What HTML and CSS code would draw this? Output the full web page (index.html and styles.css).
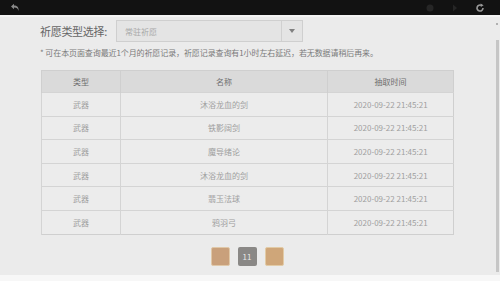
FILE: index.html
```html
<!DOCTYPE html>
<html lang="zh">
<head>
<meta charset="utf-8">
<link rel="stylesheet" href="styles.css">
</head>
<body>
<div class="topbar">
  <svg class="back" width="10" height="9" viewBox="0 0 10 9"><path d="M1 3.5 L4 0.8 L4 2.5 C7 2.5 9 4 8.5 8 C7.8 5.5 6.5 4.5 4 4.6 L4 6.2 Z" fill="#8a8a8a"/></svg>
  <div class="nav">
    <svg width="10" height="10" viewBox="0 0 10 10"><circle cx="5" cy="5" r="3.5" fill="#262626"/></svg>
    <svg width="10" height="10" viewBox="0 0 10 10"><path d="M3 1.5 L7 5 L3 8.5 Z" fill="#262626"/></svg>
    <svg width="10" height="10" viewBox="0 0 10 10"><path d="M8 5 A3 3 0 1 1 6.5 2.4" fill="none" stroke="#9a9a9a" stroke-width="1.6"/><path d="M5.6 0.6 L8.6 2.2 L5.8 4 Z" fill="#9a9a9a"/></svg>
  </div>
</div>
<div class="main">
  <div class="content">
    <div class="selrow">
      <span class="label">祈愿类型选择:</span>
      <div class="select">
        <span class="seltext">常驻祈愿</span>
        <span class="arrowbox"><span class="tri"></span></span>
      </div>
    </div>
    <p class="note">* 可在本页面查询最近1个月的祈愿记录，祈愿记录查询有1小时左右延迟，若无数据请稍后再来。</p>
    <table class="records">
      <thead>
        <tr><th class="c1">类型</th><th class="c2">名称</th><th class="c3">抽取时间</th></tr>
      </thead>
      <tbody>
        <tr><td>武器</td><td>沐浴龙血的剑</td><td>2020-09-22 21:45:21</td></tr>
        <tr><td>武器</td><td>铁影阔剑</td><td>2020-09-22 21:45:21</td></tr>
        <tr><td>武器</td><td>魔导绪论</td><td>2020-09-22 21:45:21</td></tr>
        <tr><td>武器</td><td>沐浴龙血的剑</td><td>2020-09-22 21:45:21</td></tr>
        <tr><td>武器</td><td>翡玉法球</td><td>2020-09-22 21:45:21</td></tr>
        <tr><td>武器</td><td>鸦羽弓</td><td>2020-09-22 21:45:21</td></tr>
      </tbody>
    </table>
    <div class="pager">
      <span class="pg prev"></span>
      <span class="pg cur">11</span>
      <span class="pg next"></span>
    </div>
  </div>
  <div class="scroll">
    <span class="mark"></span>
    <span class="thumb"></span>
  </div>
</div>
<div class="footer"></div>
</body>
</html>
```
FILE: styles.css
```css
* { box-sizing: border-box; }
html, body { margin: 0; padding: 0; }
body {
  width: 500px;
  height: 281px;
  overflow: hidden;
  background: #f7f7f7;
  font-family: "Noto Sans CJK SC", "Noto Sans", sans-serif;
}
.topbar {
  height: 17px;
  background: #121212;
  border-bottom: 2px solid #f4f4f4;
  display: flex;
  align-items: flex-start;
  justify-content: space-between;
  padding: 3px 0 0 10px;
}
.back { display: block; }
.nav {
  display: flex;
  gap: 15px;
  padding-right: 15px;
}
.nav svg { display: block; }
.main {
  height: 258px;
  background: #ebebeb;
  display: flex;
}
.content {
  flex: 1;
  padding: 3px 0 0 40px;
}
.selrow {
  display: flex;
  align-items: center;
  height: 22px;
}
.label {
  font-size: 11px;
  color: #666;
  width: 76px;
  letter-spacing: -0.3px;
}
.select {
  width: 187px;
  height: 22px;
  border: 1px solid #cfcfcf;
  background: #e4e4e4;
  display: flex;
  align-items: center;
  justify-content: space-between;
}
.seltext {
  font-size: 8px;
  color: #a8a8a8;
  padding-left: 8px;
}
.arrowbox {
  width: 21px;
  height: 100%;
  border-left: 1px solid #d0d0d0;
  display: flex;
  align-items: center;
  justify-content: center;
}
.tri {
  width: 0;
  height: 0;
  border-left: 3.5px solid transparent;
  border-right: 3.5px solid transparent;
  border-top: 4px solid #808080;
}
.note {
  margin: 5px 0 0 0;
  font-size: 8px;
  line-height: 12px;
  color: #7a7a7a;
  white-space: nowrap;
  letter-spacing: -0.1px;
}
.records {
  margin: 11px 0 0 1px;
  width: 413px;
  border-collapse: collapse;
  font-size: 8px;
  color: #a0a0a0;
  background: #ececec;
  border: 1px solid #cfcfcf;
}
.records th {
  background: #dadada;
  color: #6e6e6e;
  font-weight: normal;
  height: 22px;
  padding: 0;
  border-left: 1px solid #cfcfcf;
}
.records td {
  height: 23.6px;
  padding: 0;
  text-align: center;
  border-top: 1px solid #d4d4d4;
  border-left: 1px solid #d4d4d4;
}
.c1 { width: 79px; }
.c2 { width: 208px; }
.c3 { width: 126px; }
.pager {
  width: 414px;
  display: flex;
  justify-content: center;
  gap: 8px;
  margin-top: 12px;
}
.pg {
  width: 19px;
  height: 19px;
  border-radius: 2px;
  display: flex;
  align-items: center;
  justify-content: center;
  font-size: 8px;
  color: #e8e8e8;
}
.prev { background: #c9a07b; border: 1px solid #e0c8a8; }
.cur { background: #8a8886; }
.next { background: #cfa679; border: 1px solid #e2cba6; }
.scroll {
  width: 5px;
  display: flex;
  flex-direction: column;
  align-items: flex-end;
}
.mark {
  width: 2px;
  height: 2px;
  background: #b0b0b0;
  margin-top: 6px;
  margin-right: 2px;
}
.thumb {
  width: 3px;
  height: 232px;
  background: #c6c6c6;
  margin-top: 15px;
  margin-right: 1px;
}
.footer {
  height: 6px;
  background: #f7f7f7;
}
```
